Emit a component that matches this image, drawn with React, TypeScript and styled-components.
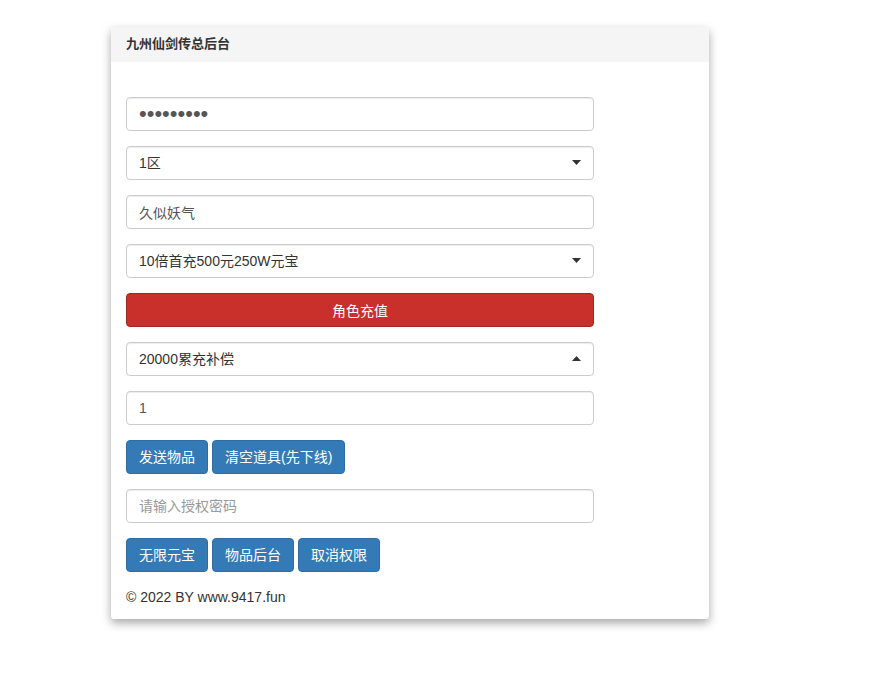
import styled, { createGlobalStyle } from "styled-components";

const GlobalStyle = createGlobalStyle`
  html, body {
    margin: 0;
    background: #fff;
  }
  body {
    font-family: "Liberation Sans", "Noto Sans CJK SC", sans-serif;
    font-size: 14px;
    line-height: 1.42857;
    color: #333;
  }
  * {
    box-sizing: border-box;
  }
`;

const Page = styled.div`
  padding: 27px 0 40px 111px;
`;

const Panel = styled.div`
  width: 598px;
  background: #fff;
  border-radius: 3px;
  box-shadow: 0 4px 10px rgba(0, 0, 0, 0.35);
  overflow: hidden;
`;

const PanelHeading = styled.div`
  background: #f5f5f5;
  height: 35px;
  padding: 0 15px;
  display: flex;
  align-items: center;
  font-size: 13px;
  font-weight: bold;
  color: #333;
`;

const PanelBody = styled.div`
  padding: 35px 15px 12px;
`;

const Form = styled.form`
  width: 468px;
  display: flex;
  flex-direction: column;
  gap: 15px;
`;

const Control = styled.input<{ $secret?: boolean }>`
  display: block;
  width: 100%;
  height: 34px;
  padding: 6px 12px;
  font-family: inherit;
  font-size: ${(p) => (p.$secret ? "22px" : "14px")};
  color: #555;
  background: #fff;
  border: 1px solid #ccc;
  border-radius: 4px;
  box-shadow: inset 0 1px 1px rgba(0, 0, 0, 0.075);
  outline: none;
  &::placeholder {
    color: #999;
    font-size: 14px;
  }
`;

const SelectWrap = styled.div`
  position: relative;
  width: 100%;
`;

const Select = styled.select`
  display: block;
  width: 100%;
  height: 34px;
  padding: 6px 12px;
  font-family: inherit;
  font-size: 14px;
  color: #333;
  background: #fff;
  border: 1px solid #ccc;
  border-radius: 4px;
  box-shadow: inset 0 1px 1px rgba(0, 0, 0, 0.075);
  appearance: none;
  outline: none;
`;

const Caret = styled.svg`
  position: absolute;
  right: 13px;
  top: 14px;
  pointer-events: none;
`;

const BlockButton = styled.button`
  display: block;
  width: 100%;
  height: 34px;
  font-family: inherit;
  font-size: 14px;
  color: #fff;
  background: #c9302c;
  border: 1px solid #a02622;
  border-radius: 4px;
`;

const ButtonRow = styled.div`
  display: flex;
  gap: 4px;
`;

const Button = styled.button`
  height: 34px;
  padding: 6px 12px;
  font-family: inherit;
  font-size: 14px;
  line-height: 20px;
  color: #fff;
  background: #337ab7;
  border: 1px solid #2e6da4;
  border-radius: 4px;
  white-space: nowrap;
`;

const Footer = styled.div`
  margin-top: 15px;
  line-height: 20px;
  color: #333;
`;

const Dropdown = ({ value, up }: { value: string; up?: boolean }) => (
  <SelectWrap>
    <Select defaultValue={value}>
      <option value={value}>{value}</option>
    </Select>
    <Caret width="9" height="5" viewBox="0 0 9 5">
      {up ? <path d="M0 5 L4.5 0 L9 5 Z" fill="#333" /> : <path d="M0 0 L9 0 L4.5 5 Z" fill="#333" />}
    </Caret>
  </SelectWrap>
);

export default function App() {
  return (
    <>
      <GlobalStyle />
      <Page>
        <Panel>
          <PanelHeading>九州仙剑传总后台</PanelHeading>
          <PanelBody>
            <Form onSubmit={(e) => e.preventDefault()}>
              <Control $secret type="password" defaultValue="123456789" />
              <Dropdown value="1区" />
              <Control type="text" defaultValue="久似妖气" />
              <Dropdown value="10倍首充500元250W元宝" />
              <BlockButton type="button">角色充值</BlockButton>
              <Dropdown value="20000累充补偿" up />
              <Control type="text" defaultValue="1" />
              <ButtonRow>
                <Button type="button">发送物品</Button>
                <Button type="button">清空道具(先下线)</Button>
              </ButtonRow>
              <Control type="password" placeholder="请输入授权密码" />
              <ButtonRow>
                <Button type="button">无限元宝</Button>
                <Button type="button">物品后台</Button>
                <Button type="button">取消权限</Button>
              </ButtonRow>
            </Form>
            <Footer>© 2022 BY www.9417.fun</Footer>
          </PanelBody>
        </Panel>
      </Page>
    </>
  );
}
